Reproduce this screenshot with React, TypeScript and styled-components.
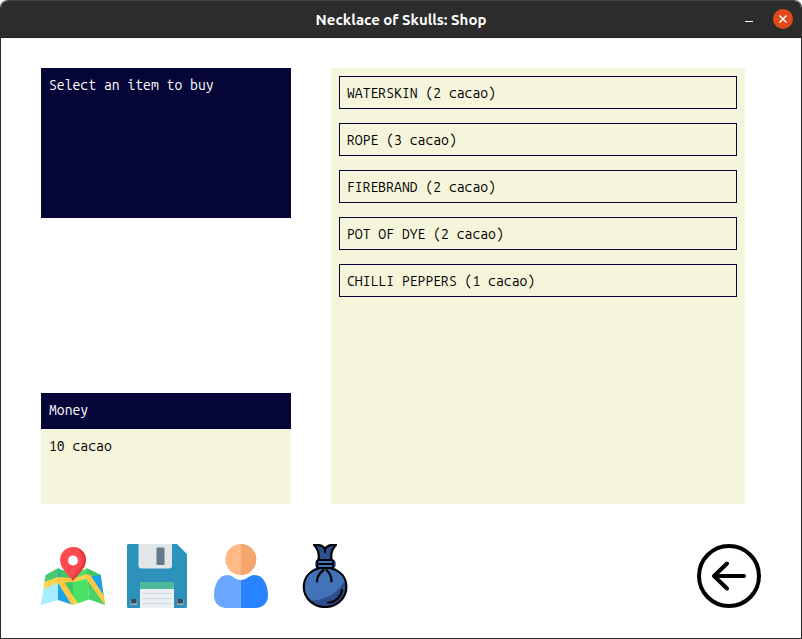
import React from "react";
import styled, { createGlobalStyle } from "styled-components";

const GlobalStyle = createGlobalStyle`
  *, *::before, *::after { box-sizing: border-box; }
  body { margin: 0; background: #ffffff; }
`;

const color = {
  navy: "#050537",
  beige: "#f5f5dc",
  frame: "#2c2c2c",
  close: "#e2491a",
};

const Window = styled.div`
  display: flex;
  flex-direction: column;
  min-height: 100vh;
  border: 1px solid #2b2b2b;
  border-top-color: #404040;
  border-radius: 8px 8px 0 0;
  overflow: hidden;
  background: #ffffff;
  font: 14px/18px "Ubuntu Mono", "DejaVu Sans Mono", monospace;
`;

const TitleBar = styled.header`
  display: grid;
  grid-template-columns: 1fr auto 1fr;
  align-items: center;
  height: 37px;
  padding: 0 8px;
  background: ${color.frame};
  border-bottom: 1px solid #1f1f1f;
`;

const Title = styled.h1`
  grid-column: 2;
  margin: 0;
  padding-top: 2px;
  color: #ffffff;
  font: bold 15px/20px Ubuntu, "Noto Sans", sans-serif;
`;

const WindowControls = styled.div`
  display: flex;
  justify-content: flex-end;
  gap: 14px;
`;

const WindowButton = styled.button<{ $fill?: string }>`
  display: grid;
  place-items: center;
  width: 20px;
  height: 20px;
  padding: 0;
  border: 0;
  border-radius: 50%;
  background: ${({ $fill }) => $fill ?? "transparent"};
`;

const Content = styled.main`
  flex: 1;
  display: flex;
  flex-direction: column;
  gap: 40px;
  padding: 30px 40px;
`;

const Columns = styled.div`
  flex: 1;
  display: grid;
  grid-template-columns: 250px 1fr;
  gap: 40px;
  padding-right: 16px;
`;

const Sidebar = styled.div`
  display: flex;
  flex-direction: column;
  justify-content: space-between;
  gap: 40px;
`;

const Message = styled.p`
  min-height: 150px;
  margin: 0;
  padding: 8px 8px 10px;
  background: ${color.navy};
  color: #ffffff;
`;

const MoneyBox = styled.section`
  background: ${color.beige};
`;

const MoneyTitle = styled.h2`
  margin: 0;
  padding: 8px 8px 10px;
  background: ${color.navy};
  color: #ffffff;
  font: inherit;
`;

const MoneyAmount = styled.p`
  min-height: 75px;
  margin: 0;
  padding: 8px 8px 10px;
`;

const ItemList = styled.ul`
  display: flex;
  flex-direction: column;
  gap: 14px;
  margin: 0;
  padding: 8px;
  list-style: none;
  background: ${color.beige};
`;

const ItemButton = styled.button`
  display: block;
  width: 100%;
  height: 33px;
  padding: 0 7px;
  border: 1px solid ${color.navy};
  background: transparent;
  color: #000000;
  font: inherit;
  text-align: left;
  cursor: pointer;
`;

const Toolbar = styled.nav`
  display: flex;
  gap: 20px;
`;

const ToolButton = styled.button<{ $end?: boolean }>`
  width: 64px;
  height: 64px;
  padding: 0;
  border: 0;
  background: transparent;
  cursor: pointer;
  margin-left: ${({ $end }) => ($end ? "auto" : "0")};

  svg { display: block; }
`;

const MapIcon = () => (
  <svg width="64" height="64" viewBox="0 0 64 64" aria-hidden="true">
    <path d="M4.500 31 17 24.300V56L0 61z" fill="#a6eefe" />
    <path d="M4.500 31 17 24.300V34L3.500 39z" fill="#4bc96b" />
    <path d="M2.500 45 3.500 38 17 33v6z" fill="#ffd44f" />
    <path d="M17 24.300 32 31v30l-15-5z" fill="#1da1ea" />
    <path d="M17 24.300 32 31v25L20 38z" fill="#43c565" />
    <path d="m17 33 15 1v4l-8.500.5L32 52v9l-1.500-.5L17 39z" fill="#ffc843" />
    <path d="m32 31 13.700-6.700L48 55.500 32 61z" fill="#4be066" />
    <path d="m32 35 13.700-5v5L32 38z" fill="#ffd44f" />
    <path d="m32 52 5 7.300L32 61z" fill="#ffd44f" />
    <path d="m45.700 24.300 14 6.700L64 61l-16-5.500z" fill="#48d267" />
    <path d="M49 32 59.700 31l2.900 21z" fill="#1da1ea" />
    <path d="m45.700 24.300 14 6.700-13.700.500z" fill="#43c565" />
    <path d="m44 31 5-.500L63 52l1 9-18.500-26z" fill="#ffc843" />
    <path d="M32 37c-3-5-13-12-13-21a13 13 0 0 1 26 0c0 9-10 16-13 21z" fill="#ff4b50" />
    <path d="M32 3a13 13 0 0 1 13 13c0 9-10 16-13 21l-1.500-2.500c4-6 11-11 11-18.500 0-6.500-4-12-9.500-13z" fill="#e8383f" />
    <circle cx="32" cy="16.500" r="5" fill="#ffffff" />
  </svg>
);

const SaveIcon = () => (
  <svg width="64" height="64" viewBox="0 0 64 64" aria-hidden="true">
    <path d="M3.500 0H52l10 10v52.500a1.500 1.500 0 0 1-1.500 1.500h-57A1.500 1.500 0 0 1 2 62.500v-61A1.500 1.500 0 0 1 3.500 0z" fill="#2c92bc" />
    <path d="M13.500 0H47v21.500a3 3 0 0 1-3 3H16.500a3 3 0 0 1-3-3z" fill="#e1e6e9" />
    <rect x="31.500" y="3.500" width="8" height="17.500" rx="1" fill="#64798a" />
    <path d="M15 64V41a3 3 0 0 1 3-3h28a3 3 0 0 1 3 3v23z" fill="#ebf0f3" />
    <path d="M15 45v-4a3 3 0 0 1 3-3h28a3 3 0 0 1 3 3v4z" fill="#4fba9b" />
    <path d="M18 49.500h28M18 54.500h28M18 59.500h28" stroke="#d2d6da" strokeWidth="1.200" strokeLinecap="round" />
    <path d="M5.500 55H12v6H5.500zM52 55h6.500v6H52z" fill="#a5b4be" />
    <path d="M6 55h5.500v4.500H6zM52.500 55H58v4.500h-5.500z" fill="#344c60" />
  </svg>
);

const PersonIcon = () => (
  <svg width="64" height="64" viewBox="0 0 64 64" aria-hidden="true">
    <circle cx="31.800" cy="15.500" r="15.500" fill="#ffba85" />
    <path d="M31.800 0a15.500 15.500 0 0 1 0 31z" fill="#f3a66d" />
    <path d="M18.500 31C10 31 5 40 5 51.500 5 59 10 64 17.500 64h14.300V36c-6 0-8-5-13.300-5z" fill="#6aa8ff" />
    <path d="M45.500 31C54 31 59 40 59 51.500 59 59 54 64 46.500 64H31.800V36c6 0 8.400-5 13.700-5z" fill="#2783ff" />
  </svg>
);

const BagIcon = () => (
  <svg width="64" height="64" viewBox="0 0 64 64" aria-hidden="true">
    <circle cx="32" cy="42.500" r="21" fill="#4272b8" />
    <path d="M52 36c4 12-5 27.500-20 27.500-7 0-12-3-15-7 17 0 28-8 35-20.500z" fill="#2e4f8f" />
    <path d="M21 1c4-.500 8.500.500 11 3 2.500-2.500 6.500-3.500 11-3-3 4-5.500 9-4.500 15H25.500c1-6-1-11-4.500-15z" fill="#2e4f8f" />
    <path d="M26 16h13a2.500 2.500 0 0 1 0 8H26a3.500 3.500 0 0 1 0-8z" fill="#4272b8" />
    <g fill="none" stroke="#050505" strokeWidth="2.200" strokeLinecap="round" strokeLinejoin="round">
      <path d="M25.500 15.500c1-6-.5-10.500-4.500-14.500 4.500-.500 9 .500 11 4 2-3.500 6.500-4.500 11-4-4 4-5.500 8.500-4.500 14.500M32 5v3" />
      <rect x="24" y="16" width="16.500" height="4" rx="2" />
      <rect x="24" y="20" width="16.500" height="4" rx="2" />
      <path d="M26 24.500C16 27 10.800 34 10.800 43a21.300 20 0 0 0 42.600 0c0-9-5.400-16-15.400-18.500M30.500 26C26.500 29 24 33 24 37.500M33.500 26c3.500 3 5 7 5 11.500M49 46c-1 7-7 12.500-14 12.500" />
    </g>
  </svg>
);

const BackIcon = () => (
  <svg width="64" height="64" viewBox="0 0 64 64" fill="none" stroke="#000000" strokeWidth="4" strokeLinecap="round" strokeLinejoin="round" aria-hidden="true">
    <circle cx="32" cy="32" r="30" />
    <path d="M47 32H17M30 19.500 17 32l13 12.500" />
  </svg>
);

const items = [
  { name: "WATERSKIN", price: 2 },
  { name: "ROPE", price: 3 },
  { name: "FIREBRAND", price: 2 },
  { name: "POT OF DYE", price: 2 },
  { name: "CHILLI PEPPERS", price: 1 },
];

const tools = [
  { label: "Map", Icon: MapIcon },
  { label: "Save", Icon: SaveIcon },
  { label: "Character", Icon: PersonIcon },
  { label: "Inventory", Icon: BagIcon },
];

export default function App() {
  return (
    <>
      <GlobalStyle />
      <Window>
        <TitleBar>
          <Title>Necklace of Skulls: Shop</Title>
          <WindowControls>
            <WindowButton aria-label="Minimize">
              <svg width="20" height="20" viewBox="0 0 20 20">
                <path d="M6 12.500h8" stroke="#ffffff" />
              </svg>
            </WindowButton>
            <WindowButton aria-label="Close" $fill={color.close}>
              <svg width="20" height="20" viewBox="0 0 20 20">
                <path d="m6.500 6.500 7 7M13.500 6.500l-7 7" stroke="#ffffff" strokeWidth="1.500" />
              </svg>
            </WindowButton>
          </WindowControls>
        </TitleBar>
        <Content>
          <Columns>
            <Sidebar>
              <Message>Select an item to buy</Message>
              <MoneyBox>
                <MoneyTitle>Money</MoneyTitle>
                <MoneyAmount>10 cacao</MoneyAmount>
              </MoneyBox>
            </Sidebar>
            <ItemList>
              {items.map(({ name, price }) => (
                <li key={name}>
                  <ItemButton>{`${name} (${price} cacao)`}</ItemButton>
                </li>
              ))}
            </ItemList>
          </Columns>
          <Toolbar>
            {tools.map(({ label, Icon }) => (
              <ToolButton key={label} aria-label={label}>
                <Icon />
              </ToolButton>
            ))}
            <ToolButton aria-label="Back" $end>
              <BackIcon />
            </ToolButton>
          </Toolbar>
        </Content>
      </Window>
    </>
  );
}
